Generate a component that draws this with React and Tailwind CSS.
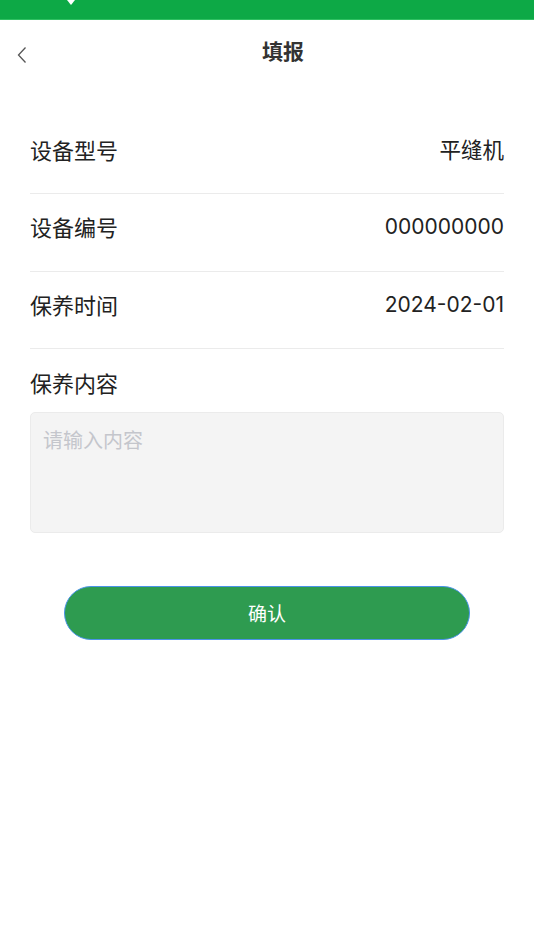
import React from 'react';

const font = { fontFamily: '"Noto Sans CJK SC", "Liberation Sans", sans-serif' };
const valueFont = { fontFamily: 'Inter, "Noto Sans CJK SC", sans-serif' };

const rows = [
  { label: '设备型号', value: '平缝机', cjk: true },
  { label: '设备编号', value: '000000000' },
  { label: '保养时间', value: '2024-02-01' },
];

const App = () => {
  return (
    <div className="w-[534px] h-[950px] bg-white text-[#222]" style={font}>
      {/* status strip */}
      <div className="relative h-[20px] bg-[#0da946] border-b border-[#2fc062]">
        <svg className="absolute left-[65px] top-0" width="12" height="6" viewBox="0 0 12 6">
          <polygon points="2,0 10,0 6,5" fill="#fff" />
        </svg>
      </div>

      {/* header */}
      <div className="relative flex items-center justify-center h-[62px]">
        <button className="absolute left-[14px] top-[25px] w-[16px] h-[20px] flex items-center justify-center">
          <svg width="10" height="18" viewBox="0 0 10 18" fill="none">
            <path d="M8.5 1.5L1.5 9l7 7.5" stroke="#555" strokeWidth="1.3" />
          </svg>
        </button>
        <h1 className="ml-[32px] text-[21px] font-bold text-[#333] -mt-[1px]">填报</h1>
      </div>

      {/* form */}
      <div className="px-[30px] pt-[34.5px]">
        {rows.map((r) => (
          <div
            key={r.label}
            className="flex items-center justify-between h-[77.5px] pb-[11px] border-b-[1.5px] border-[#ebebeb]"
          >
            <span className="text-[22px] text-[#222]">{r.label}</span>
            {r.cjk ? (
              <span className="text-[21.5px] text-[#222]">{r.value}</span>
            ) : (
              <span className="text-[21px] text-[#222]" style={valueFont}>{r.value}</span>
            )}
          </div>
        ))}

        <div className="pt-[18px] text-[22px] text-[#222] leading-[30px]">保养内容</div>
        <textarea
          className="mt-[15px] block w-full h-[121px] resize-none rounded-[5px] border border-[#ebebeb] bg-[#f4f4f4] px-[12px] py-[12px] text-[20px] leading-[30px] placeholder:text-[#c4c6cc] outline-none"
          style={font}
          placeholder="请输入内容"
        />
      </div>

      <div className="flex justify-center pt-[53px]">
        <button className="w-[406px] h-[54px] rounded-full bg-[#2e9b50] border-[1.5px] border-[#4a93e8] text-white text-[19px]">
          确认
        </button>
      </div>
    </div>
  );
};

export default App;
